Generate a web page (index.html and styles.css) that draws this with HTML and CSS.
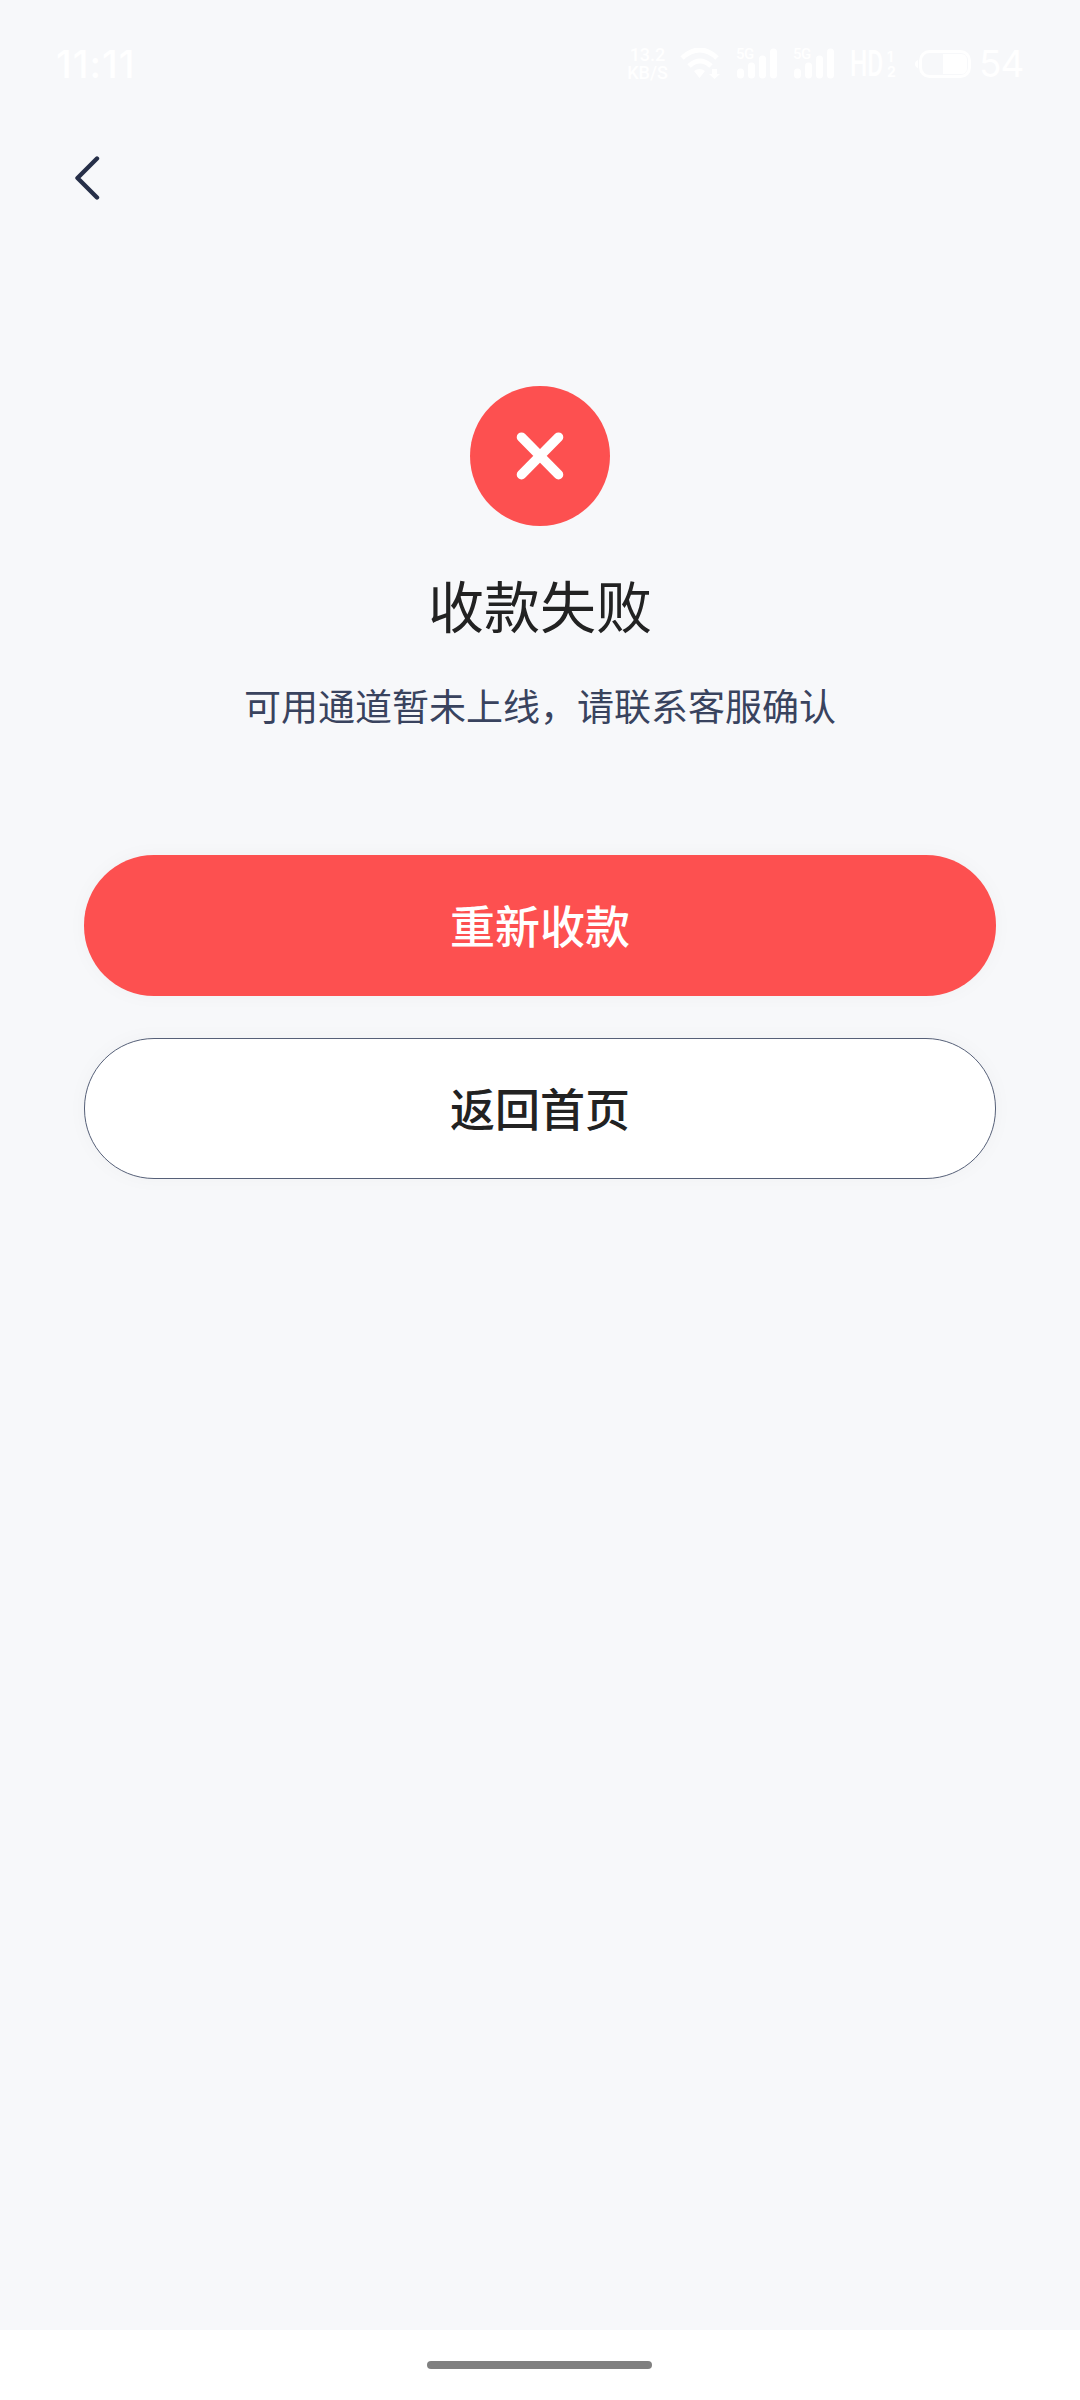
FILE: index.html
```html
<!DOCTYPE html>
<html lang="zh-CN">
<head>
<meta charset="utf-8">
<title>收款失败</title>
<link rel="stylesheet" href="styles.css">
</head>
<body>
<div class="screen">
  <header class="status">
    <span class="clock">11:11</span>
    <div class="indicators">
      <div class="speed"><span>13.2</span><span>KB/S</span></div>
      <svg class="wifi" width="40" height="32" viewBox="0 0 40 32">
        <path d="M2 10Q20-6 37 10M9 18Q20 8 31 18" fill="none" stroke="#fff" stroke-width="5"/>
        <path d="M14 23Q19.500 19 25 23L19.500 30ZM32 21h5v5h3l-5.500 5L29 26h3z" fill="#fff"/>
      </svg>
      <div class="signal">
        <span class="net">5G</span>
        <svg width="42" height="32" viewBox="0 0 42 32"><path d="M4.500 24v3M15.500 18v9M26.500 11v16M37.500 4v23" stroke="#fff" stroke-width="7" stroke-linecap="round"/></svg>
      </div>
      <div class="signal">
        <span class="net">5G</span>
        <svg width="42" height="32" viewBox="0 0 42 32"><path d="M4.500 24v3M15.500 18v9M26.500 11v16M37.500 4v23" stroke="#fff" stroke-width="7" stroke-linecap="round"/></svg>
      </div>
      <div class="hd"><span class="hd-label">HD</span><span class="sims"><span>1</span><span>2</span></span></div>
      <svg class="battery" width="56" height="28" viewBox="0 0 56 28">
        <rect x="5.500" y="1.500" width="49" height="25" rx="9" fill="none" stroke="#fff" stroke-width="3"/>
        <path d="M28 4h18q6 0 6 6v8q0 6-6 6H28zM3 10v8q-3-1-3-4t3-4z" fill="#fff"/>
      </svg>
      <span class="level">54</span>
    </div>
  </header>
  <nav class="navbar">
    <svg width="26" height="46" viewBox="0 0 26 46"><path d="M22 3.500L2.500 23 22 42.500" fill="none" stroke="#262f48" stroke-width="4.400" stroke-linecap="round" stroke-linejoin="round"/></svg>
  </nav>
  <main class="result">
    <svg class="badge" width="140" height="140" viewBox="0 0 140 140">
      <circle cx="70" cy="70" r="70" fill="#fd5050"/>
      <path d="M51.500 51.200l37 37.400M88.500 51.200l-37 37.400" stroke="#fff" stroke-width="9.600" stroke-linecap="round"/>
    </svg>
    <h1 class="title">收款失败</h1>
    <p class="message">可用通道暂未上线，请联系客服确认</p>
    <button class="button primary">重新收款</button>
    <button class="button secondary">返回首页</button>
  </main>
  <footer class="home"><div class="handle"></div></footer>
</div>
</body>
</html>
```
FILE: styles.css
```css
* { box-sizing: border-box; }
body { margin: 0; font-family: "Noto Sans CJK SC", sans-serif; }
.screen {
  width: 1080px;
  height: 2400px;
  display: flex;
  flex-direction: column;
  background: #f7f8fa;
}
.status {
  height: 128px;
  padding: 0 56px;
  display: flex;
  justify-content: space-between;
  align-items: center;
  color: #fff;
  font-family: Inter, sans-serif;
}
.clock { font-size: 38px; font-weight: 500; line-height: 40px; letter-spacing: 1px; }
.indicators { display: flex; align-items: center; height: 40px; }
.speed {
  width: 43px;
  display: flex;
  flex-direction: column;
  align-items: center;
  font: 500 18px/18px Roboto, sans-serif;
  margin-right: 11px;
}
.wifi { margin-right: 16px; }
.signal { position: relative; width: 42px; height: 32px; margin-right: 15px; }
.net { position: absolute; left: 0; top: 0; font: 500 15px/12px Roboto, sans-serif; letter-spacing: -.5px; }
.hd { display: flex; align-items: center; gap: 3px; width: 48px; margin-right: 17px; }
.hd-label { font: 500 36px/32px Roboto, sans-serif; width: 34px; transform: scaleX(.68); transform-origin: left; }
.sims { display: flex; flex-direction: column; font-size: 14px; font-weight: 700; line-height: 15px; }
.battery { margin-right: 8px; }
.level { font-size: 37px; line-height: 40px; width: 45px; letter-spacing: -1px; }
.navbar { height: 100px; padding: 27px 0 0 75px; }
.navbar svg { display: block; }
.result {
  flex: 1;
  display: flex;
  flex-direction: column;
  align-items: center;
  padding: 158px 84px 0;
}
.badge { display: block; }
.title { margin: 38px 0 0; font-size: 56px; font-weight: 400; line-height: 80px; color: #222; }
.message { margin: 33px 0 0; font-size: 37px; line-height: 56px; color: #39435e; }
.button {
  width: 912px;
  height: 141px;
  border: 0;
  border-radius: 70px;
  padding: 0 0 2px;
  font: 500 45px/60px "Noto Sans CJK SC", sans-serif;
  box-shadow: 0 0 20px rgba(0, 0, 0, .03);
}
.primary { margin-top: 122px; background: #fd5050; color: #fff; }
.secondary { margin-top: 42px; background: #fff; border: 1px solid #566078; color: #222; }
.home { height: 70px; padding-top: 31px; background: #fff; }
.handle { width: 225px; height: 8px; margin: 0 0 0 427px; border-radius: 4px; background: #808080; }
```
